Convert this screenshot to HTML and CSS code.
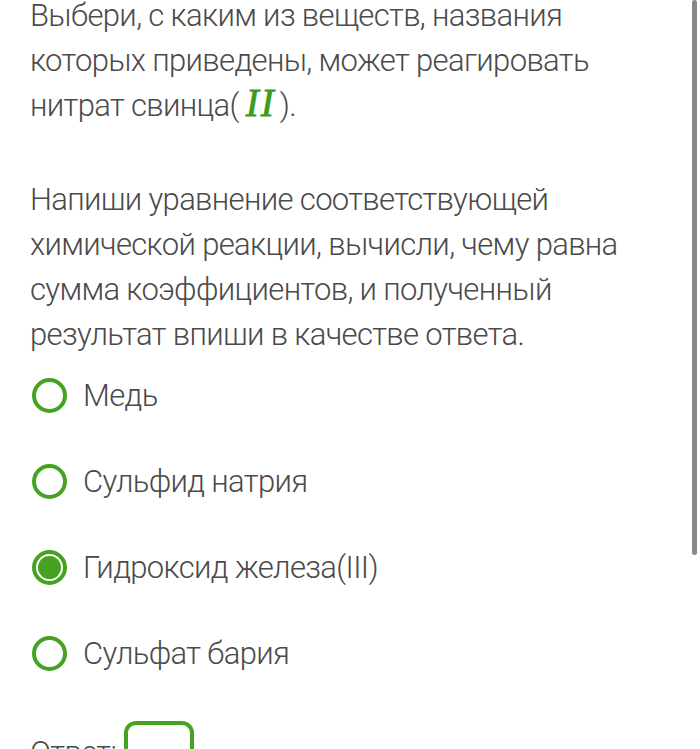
FILE: index.html
```html
<!DOCTYPE html>
<html lang="ru">
<head>
  <meta charset="UTF-8" />
  <meta name="viewport" content="width=device-width, initial-scale=1.0"/>
  <title>Задание</title>
  <link rel="stylesheet" href="styles.css">
</head>
<body>
  <div class="task">
    <p class="task-text">Выбери, с каким из веществ, названия которых приведены, может реагировать нитрат свинца(<span class="math">II</span>).</p>
    <p class="task-text">Напиши уравнение соответствующей химической реакции, вычисли, чему равна сумма коэффициентов, и полученный результат впиши в качестве ответа.</p>

    <ul class="options">
      <li class="option"><span class="radio"></span>Медь</li>
      <li class="option"><span class="radio"></span>Сульфид натрия</li>
      <li class="option"><span class="radio checked"></span>Гидроксид железа(III)</li>
      <li class="option"><span class="radio"></span>Сульфат бария</li>
    </ul>

    <div class="answer">
      <span class="answer-label">Ответ:</span>
      <span class="answer-box"></span>
    </div>
  </div>

  <div class="scrollbar"></div>
</body>
</html>
```

FILE: styles.css
```css
* {
  margin: 0;
  padding: 0;
  box-sizing: border-box;
}

body {
  font-family: Roboto, "Noto Sans", sans-serif;
  font-weight: 300;
  background: #fff;
  color: #4a4a4a;
  letter-spacing: -0.65px;
  overflow: hidden;
}

.task {
  margin-top: -7px;
  padding: 0 40px 0 30px;
}

.task-text {
  font-size: 31px;
  line-height: 45px;
  margin-bottom: 49px;
}

.task-text:nth-of-type(2) {
  margin-bottom: 0;
}

.math {
  font-family: "Liberation Serif", serif;
  font-style: italic;
  font-size: 39px;
  line-height: 0;
  letter-spacing: 2px;
  color: #3c9a1c;
  padding: 0 4px 0 7px;
  -webkit-text-stroke: 0.8px #3c9a1c;
}

.options {
  list-style: none;
  margin-top: -5px;
}

.option {
  display: flex;
  align-items: center;
  gap: 16px;
  height: 86px;
  font-size: 31px;
  padding-left: 2px;
}

.radio {
  width: 35px;
  height: 35px;
  border: 4px solid #45a321;
  border-radius: 50%;
  flex-shrink: 0;
  position: relative;
}

.radio.checked::after {
  content: "";
  position: absolute;
  top: 2px;
  left: 2px;
  right: 2px;
  bottom: 2px;
  border-radius: 50%;
  background: #45a321;
}

.answer {
  display: flex;
  align-items: flex-start;
  gap: 8px;
  margin-top: 25px;
  font-size: 31px;
}

.answer-label {
  padding-top: 9px;
  line-height: 45px;
}

.answer-box {
  width: 70px;
  height: 50px;
  border: 4px solid #45a321;
  border-radius: 12px;
}

.scrollbar {
  position: fixed;
  top: 0;
  right: 3px;
  width: 5px;
  height: 555px;
  border-radius: 3px;
  background: #888;
}
```
